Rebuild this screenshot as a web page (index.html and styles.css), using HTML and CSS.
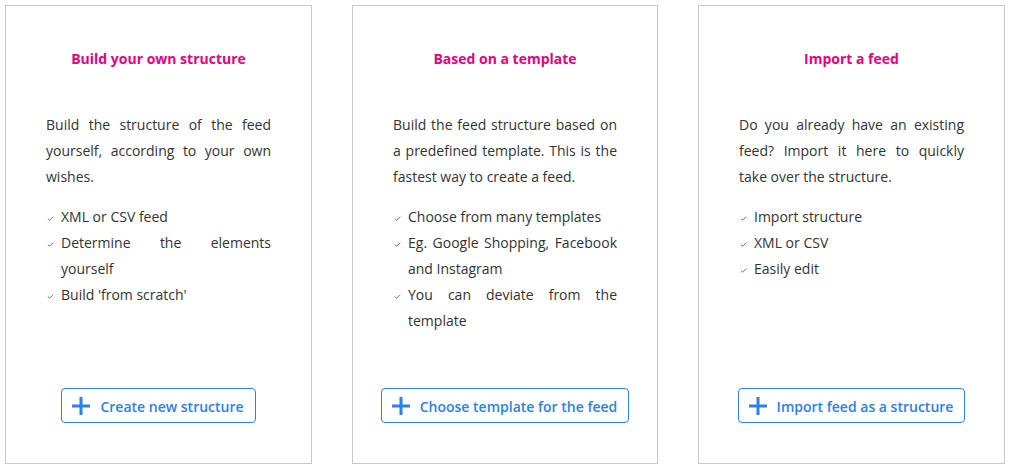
FILE: index.html
```html
<!DOCTYPE html>
<html>
<head>
<meta charset="utf-8">
<link rel="stylesheet" href="styles.css">
</head>
<body>
<div class="cards">
  <div class="card">
    <h2 class="card-title">Build your own structure</h2>
    <p class="card-text">Build the structure of the feed yourself, according to your own wishes.</p>
    <ul class="checks">
      <li><svg class="check" viewBox="0 0 8 6"><path d="M0.8 3.2 L3 5 L7.2 0.8" /></svg><span>XML or CSV feed</span></li>
      <li><svg class="check" viewBox="0 0 8 6"><path d="M0.8 3.2 L3 5 L7.2 0.8" /></svg><span>Determine the elements yourself</span></li>
      <li><svg class="check" viewBox="0 0 8 6"><path d="M0.8 3.2 L3 5 L7.2 0.8" /></svg><span>Build 'from scratch'</span></li>
    </ul>
    <div class="action">
      <button class="btn"><svg class="plus" viewBox="0 0 18 18"><path d="M9 0 V18 M0 9 H18" /></svg><span class="btn-label">Create new structure</span></button>
    </div>
  </div>
  <div class="card">
    <h2 class="card-title">Based on a template</h2>
    <p class="card-text">Build the feed structure based on a predefined template. This is the fastest way to create a feed.</p>
    <ul class="checks">
      <li><svg class="check" viewBox="0 0 8 6"><path d="M0.8 3.2 L3 5 L7.2 0.8" /></svg><span>Choose from many templates</span></li>
      <li><svg class="check" viewBox="0 0 8 6"><path d="M0.8 3.2 L3 5 L7.2 0.8" /></svg><span>Eg. Google Shopping, Facebook and Instagram</span></li>
      <li><svg class="check" viewBox="0 0 8 6"><path d="M0.8 3.2 L3 5 L7.2 0.8" /></svg><span>You can deviate from the template</span></li>
    </ul>
    <div class="action">
      <button class="btn"><svg class="plus" viewBox="0 0 18 18"><path d="M9 0 V18 M0 9 H18" /></svg><span class="btn-label">Choose template for the feed</span></button>
    </div>
  </div>
  <div class="card">
    <h2 class="card-title">Import a feed</h2>
    <p class="card-text">Do you already have an existing feed? Import it here to quickly take over the structure.</p>
    <ul class="checks">
      <li><svg class="check" viewBox="0 0 8 6"><path d="M0.8 3.2 L3 5 L7.2 0.8" /></svg><span>Import structure</span></li>
      <li><svg class="check" viewBox="0 0 8 6"><path d="M0.8 3.2 L3 5 L7.2 0.8" /></svg><span>XML or CSV</span></li>
      <li><svg class="check" viewBox="0 0 8 6"><path d="M0.8 3.2 L3 5 L7.2 0.8" /></svg><span>Easily edit</span></li>
    </ul>
    <div class="action">
      <button class="btn"><svg class="plus" viewBox="0 0 18 18"><path d="M9 0 V18 M0 9 H18" /></svg><span class="btn-label">Import feed as a structure</span></button>
    </div>
  </div>
</div>
</body>
</html>
```
FILE: styles.css
```css
html, body {
  margin: 0;
  padding: 0;
  background: #ffffff;
}
body {
  font-family: "Open Sans", "Liberation Sans", sans-serif;
  color: #333333;
}
.cards {
  display: grid;
  grid-template-columns: 307px 306px 307px;
  column-gap: 40px;
  padding: 5px 0 0 5px;
}
.card {
  box-sizing: border-box;
  height: 459px;
  border: 1px solid #c9c9c9;
  padding: 43px 40px 40px;
  display: flex;
  flex-direction: column;
}
.card-title {
  margin: 0;
  font-size: 14px;
  line-height: 20px;
  font-weight: 700;
  color: #e4007f;
  text-align: center;
}
.card-text {
  margin: 43px 0 0;
  font-size: 14px;
  line-height: 26px;
  text-align: justify;
}
.checks {
  list-style: none;
  margin: 14px 0 0;
  padding: 0;
}
.checks li {
  display: flex;
  align-items: flex-start;
  font-size: 14px;
  line-height: 26px;
}
.checks li span {
  flex: 1;
  text-align: justify;
}
.check {
  flex: none;
  width: 7px;
  height: 5px;
  margin: 12px 7px 0 1px;
  fill: none;
  stroke: #666666;
  stroke-width: 1.1;
}
.action {
  margin-top: auto;
  display: flex;
  justify-content: center;
}
.btn {
  flex: none;
  white-space: nowrap;
  box-sizing: border-box;
  height: 35px;
  display: inline-flex;
  align-items: center;
  gap: 10px;
  padding: 0 11px 0 10px;
  background: #ffffff;
  border: 1px solid #2c80e6;
  border-radius: 4px;
  font-family: "Open Sans", "Liberation Sans", sans-serif;
  font-size: 14px;
  font-weight: 600;
  color: #2c80e6;
  cursor: pointer;
}
.btn-label {
  padding-top: 2px;
}
.plus {
  flex: none;
  width: 18px;
  height: 18px;
  fill: none;
  stroke: #2c80e6;
  stroke-width: 3;
}
```
